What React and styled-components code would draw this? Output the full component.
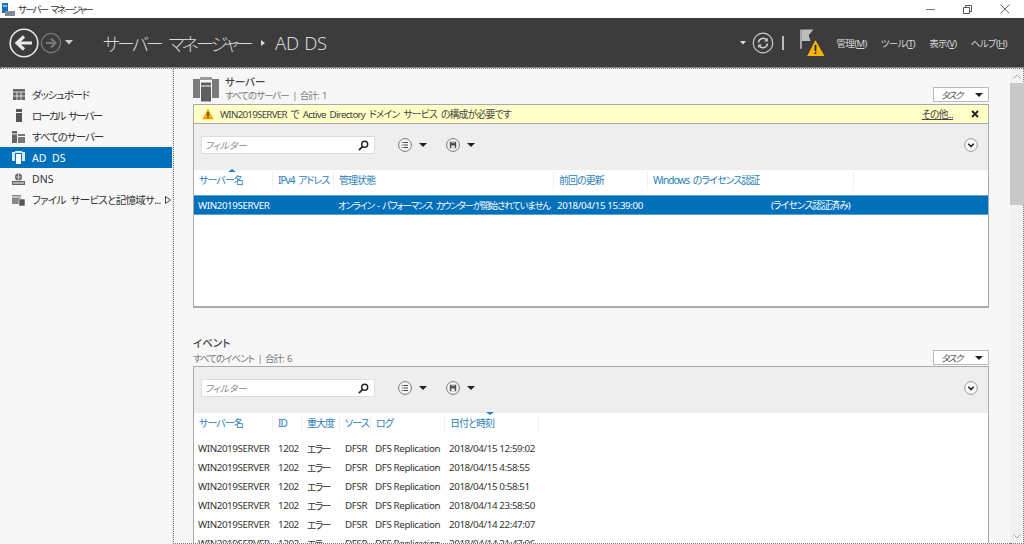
import React from 'react'
import styled, { createGlobalStyle } from 'styled-components'

const FONT = '"Noto Sans", "Noto Sans CJK JP", sans-serif'

const GlobalStyle = createGlobalStyle`
  html, body { margin: 0; padding: 0; background: #f7f7f7; overflow: hidden; }
  * { box-sizing: border-box; }
  body { font-family: ${FONT}; font-size: 10px; color: #333; font-feature-settings: "palt" 1; }
`

const Page = styled.div`
  width: 1024px;
  height: 544px;
  display: flex;
  flex-direction: column;
  overflow: hidden;
`
const TitleBar = styled.div`
  height: 18px;
  background: #fff;
  display: flex;
  align-items: center;
  padding-left: 2px;
  gap: 3px;
  flex: none;
`
const TitleText = styled.span`
  font-size: 9.5px;
  letter-spacing: -1.9px;
  word-spacing: 3px;
  color: #333;
`
const WinButtons = styled.div`
  margin-left: auto;
  display: flex;
  align-items: center;
  gap: 28px;
  padding-right: 14px;
`
const Header = styled.div`
  height: 50px;
  flex: none;
  background: #3c3c3c;
  display: flex;
  align-items: center;
  padding: 0 17px 0 9px;
  border-bottom: 1px solid #8a8a8a;
`
const Crumb = styled.div`
  margin-left: 30px;
  display: flex;
  align-items: center;
  color: #d9d9d9;
  font-size: 18px;
  letter-spacing: -2.9px;
  word-spacing: 6px;
  font-weight: 300;
`
const CrumbLast = styled.span`
  font-size: 18.5px;
  letter-spacing: -0.3px;
  word-spacing: 1px;
`
const CrumbSep = styled.span`
  width: 0;
  height: 0;
  margin: 0 10px 0 10px;
  border-left: 4px solid #ddd;
  border-top: 3px solid transparent;
  border-bottom: 3px solid transparent;
`
const HeaderRight = styled.div`
  margin-left: auto;
  display: flex;
  align-items: center;
`
const Menu = styled.div`
  display: flex;
  gap: 14px;
  margin-left: 11px;
`
const MenuItem = styled.span`
  color: #d6d6d6;
  font-size: 9.5px;
  letter-spacing: -0.6px;
`
const Body = styled.div`
  flex: 1;
  min-height: 0;
  display: flex;
  border-top: 1px dotted #777;
`
const Sidebar = styled.div`
  width: 173px;
  flex: none;
  background: #f7f7f7;
  padding-top: 15px;
  border-right: 1px solid #e4e4e4;
`
const NavItem = styled.div`
  height: 21px;
  display: flex;
  align-items: center;
  padding-left: 12px;
  gap: 7px;
  font-size: 10.5px;
  letter-spacing: ${p => p.$ls}px;
  word-spacing: 3px;
  white-space: nowrap;
  color: ${p => (p.$active ? '#fff' : '#333')};
  background: ${p => (p.$active ? '#0070bb' : 'transparent')};
`
const NavIcon = styled.span`
  width: 13px;
  display: flex;
  justify-content: center;
  flex: none;
`
const Main = styled.div`
  width: 837px;
  flex: none;
  padding: 7px 21px 0 19px;
  border-left: 1px dotted #777;
  border-bottom: 1px dotted #777;
  overflow: hidden;
`
const SectionHead = styled.div`
  display: flex;
  align-items: flex-end;
  height: 28px;
`
const EventHead = styled(SectionHead)`
  margin-top: 30px;
`
const HeadIcon = styled.div`
  width: 32px;
  margin-bottom: 2px;
`
const HeadText = styled.div`
  flex: 1;
  margin-bottom: ${p => p.$mb}px;
`
const HeadTitle = styled.div`
  font-size: 10.5px;
  font-weight: 500;
  line-height: 13px;
  color: #444;
  margin-bottom: ${p => p.$mb || 0}px;
`
const HeadSub = styled.div`
  font-size: 9.5px;
  letter-spacing: -1px;
  word-spacing: 2px;
  line-height: 13px;
  color: #777;
`
const TaskButton = styled.div`
  width: 56px;
  height: 15px;
  margin-bottom: ${p => p.$mb}px;
  border: 1px solid #bbb;
  background: #fff;
  display: flex;
  align-items: center;
  justify-content: space-between;
  padding: 0 5px 0 7px;
  font-size: 9.5px;
  font-style: italic;
  letter-spacing: -1.5px;
  color: #555;
`
const Tri = styled.span`
  width: 0;
  height: 0;
  border-top: 4px solid #222;
  border-left: 4px solid transparent;
  border-right: 4px solid transparent;
`
const Panel = styled.div`
  width: 796px;
  border: 1px solid #aaa;
  border-bottom-width: 2px;
  background: #fff;
  height: ${p => p.$height}px;
  overflow: hidden;
  flex: none;
`
const Notice = styled.div`
  height: 19px;
  background: #ffffc8;
  border-bottom: 1px solid #aaa;
  display: flex;
  align-items: center;
  padding: 0 9px 0 8px;
  font-size: 9.8px;
  color: #444;
`
const NoticeText = styled.span`
  margin-left: 6px;
  flex: 1;
  letter-spacing: -0.75px;
  word-spacing: 2px;
`
const NoticeLink = styled.span`
  text-decoration: underline;
  margin-right: 18px;
  letter-spacing: -0.8px;
`
const FilterRow = styled.div`
  height: 46px;
  background: #eee;
  display: flex;
  align-items: center;
  padding: 0 10px 4px 7px;
`
const FilterBox = styled.div`
  width: 174px;
  height: 18px;
  background: #fff;
  border: 1px solid #ddd;
  display: flex;
  align-items: center;
  justify-content: space-between;
  padding: 0 5px 0 3px;
  font-size: 9.5px;
  font-style: italic;
  color: #888;
`
const ToolBtn = styled.div`
  display: flex;
  align-items: center;
  gap: 7px;
  margin-left: ${p => p.$gap}px;
`
const Expand = styled.div`
  margin-left: auto;
  display: flex;
`
const HeaderRow = styled.div`
  display: flex;
  height: ${p => p.$height}px;
  padding-top: 2px;
  align-items: flex-start;
`
const ColHead = styled.div`
  width: ${p => p.$w}px;
  height: 18px;
  flex: none;
  padding-left: 5px;
  border-right: 1px solid #f0f0f0;
  color: #2a80b9;
  font-size: 10px;
  letter-spacing: -0.95px;
  word-spacing: 2px;
  line-height: 17px;
  white-space: nowrap;
  position: relative;
`
const SortMark = styled.span`
  position: absolute;
  top: -3px;
  left: ${p => p.$left}px;
  width: 0;
  height: 0;
  border-left: 4px solid transparent;
  border-right: 4px solid transparent;
  ${p => (p.$down ? 'border-top: 3px solid #2a80b9;' : 'border-bottom: 3px solid #2a80b9;')}
`
const SelRow = styled.div`
  height: 20px;
  background: #0070bb;
  border-top: 1px solid #5aa3d6;
  border-bottom: 1px solid #5aa3d6;
  color: #fff;
  display: flex;
  align-items: center;
  white-space: nowrap;
  font-size: 9.8px;
`
const Cell = styled.div`
  width: ${p => p.$w}px;
  flex: none;
  padding-left: 4px;
  white-space: nowrap;
  letter-spacing: ${p => p.$ls ?? -0.4}px;
`
const StatusCell = styled(Cell)`
  font-size: 9.3px;
  word-spacing: 2px;
`
const EventList = styled.div`
  padding-top: 4px;
`
const EventRow = styled.div`
  height: 19px;
  display: flex;
  align-items: center;
  font-size: 9.8px;
  color: #333;
`
const Scrollbar = styled.div`
  width: 14px;
  flex: none;
  background: #f1f1f1;
  display: flex;
  flex-direction: column;
  align-items: center;
  border-bottom: 1px dotted #777;
  border-right: 1px dotted #777;
`
const ScrollThumb = styled.div`
  width: 14px;
  height: 122px;
  background: #c8c8c8;
`
const ScrollEnd = styled.div`
  height: 14px;
  flex: none;
  display: flex;
  align-items: center;
  justify-content: center;
  margin-top: ${p => (p.$bottom ? 'auto' : '0')};
`

const Warn = ({ size = 13 }) => (
  <svg width={size} height={size} viewBox="0 0 16 16" style={{ flex: 'none' }}>
    <path d="M8 1 L15.5 15 H0.5 Z" fill="#f8a800" />
    <rect x="7.2" y="5.5" width="1.6" height="5.5" fill="#222" />
    <rect x="7.2" y="12" width="1.6" height="1.6" fill="#222" />
  </svg>
)

const SearchIcon = () => (
  <svg width="11" height="11" viewBox="0 0 12 12">
    <circle cx="7.3" cy="4.7" r="3.3" fill="none" stroke="#222" strokeWidth="1.5" />
    <path d="M4.8 7.2 L1 11" stroke="#222" strokeWidth="1.8" />
  </svg>
)

const ListCircle = () => (
  <svg width="14" height="14" viewBox="0 0 14 14">
    <circle cx="7" cy="7" r="6.4" fill="#f6f6f6" stroke="#777" />
    <path d="M5.5 4.5H10M5.5 7H10M5.5 9.5H10M3.7 4.5H4.7M3.7 7H4.7M3.7 9.5H4.7" stroke="#444" />
  </svg>
)

const SaveCircle = () => (
  <svg width="14" height="14" viewBox="0 0 14 14">
    <circle cx="7" cy="7" r="6.4" fill="#f6f6f6" stroke="#777" />
    <path d="M3.8 3.8H10.2V10.2H3.8Z" fill="#4a4a4a" />
    <rect x="5.4" y="3.8" width="3.2" height="1.5" fill="#aaa" />
    <rect x="5.2" y="7.4" width="3.6" height="2.8" fill="#e4e4e4" />
  </svg>
)

const ExpandIcon = () => (
  <svg width="14" height="14" viewBox="0 0 14 14">
    <circle cx="7" cy="7" r="6.3" fill="#fafafa" stroke="#999" />
    <path d="M4.3 5.8 L7 8.5 L9.7 5.8" fill="none" stroke="#222" strokeWidth="1.6" />
  </svg>
)

const ServerGroup = () => (
  <svg width="26" height="25" viewBox="0 0 26 25" style={{ display: 'block' }}>
    <path d="M0 2H7V21H0Z" fill="#7b7b7b" />
    <path d="M19 2H26V21H19Z" fill="#7b7b7b" />
    <path d="M7 0H19V3H7Z" fill="#9a9a9a" />
    <path d="M7.5 5H18.5V25H7.5Z" fill="#5f5f5f" stroke="#f7f7f7" />
    <path d="M8 9H18" stroke="#f7f7f7" />
  </svg>
)

const navIcons = {
  dash: (
    <svg width="12" height="11" viewBox="0 0 12 11">
      <path d="M0 0H12V11H0Z" fill="#666" />
      <path d="M0 3H12M0 7H12M4 3V11M8 3V11" stroke="#f7f7f7" strokeWidth="0.8" />
    </svg>
  ),
  local: (
    <svg width="6" height="13" viewBox="0 0 6 13">
      <path d="M0 0H6V13H0Z" fill="#555" />
      <path d="M0 3.5H6" stroke="#f7f7f7" />
    </svg>
  ),
  all: (
    <svg width="13" height="12" viewBox="0 0 13 12">
      <path d="M0 0H5V12H0Z" fill="#666" />
      <path d="M6 3H13V12H6Z" fill="#777" />
      <path d="M0 3H5M6 5.5H13" stroke="#f7f7f7" />
    </svg>
  ),
  ad: (
    <svg width="13" height="13" viewBox="0 0 13 13">
      <path d="M0 1H3V10H0ZM10 1H13V10H10ZM3 0H10V2H3Z" fill="#d8e8f4" />
      <path d="M4 3H9V13H4Z" fill="#fff" />
    </svg>
  ),
  dns: (
    <svg width="13" height="12" viewBox="0 0 13 12">
      <circle cx="6.5" cy="4" r="3.6" fill="#666" />
      <path d="M0 8H13V12H0Z" fill="#666" />
      <path d="M1 10H12" stroke="#f7f7f7" />
      <path d="M6.5 1V7M3.5 4H9.5" stroke="#f7f7f7" strokeWidth="0.7" />
    </svg>
  ),
  file: (
    <svg width="13" height="12" viewBox="0 0 13 12">
      <path d="M0 1H9V10H0Z" fill="#888" />
      <path d="M0 3H9" stroke="#f7f7f7" />
      <path d="M7 5H13V12H7Z" fill="#555" stroke="#f7f7f7" strokeWidth="0.6" />
    </svg>
  ),
}

const navItems = [
  { key: 'dash', label: 'ダッシュボード', ls: -1.2 },
  { key: 'local', label: 'ローカル サーバー', ls: -1.9 },
  { key: 'all', label: 'すべてのサーバー', ls: -1 },
  { key: 'ad', label: 'AD DS', ls: 0, active: true },
  { key: 'dns', label: 'DNS', ls: 0 },
  { key: 'file', label: 'ファイル サービスと記憶域サ...', ls: -0.7, more: true },
]

const serverCols = [
  { t: 'サーバー名', w: 79 },
  { t: 'IPv4 アドレス', w: 61 },
  { t: '管理状態', w: 220 },
  { t: '前回の更新', w: 94 },
  { t: 'Windows のライセンス認証', w: 206 },
]

const eventCols = [
  { t: 'サーバー名', w: 79 },
  { t: 'ID', w: 29 },
  { t: '重大度', w: 38 },
  { t: 'ソース', w: 31 },
  { t: 'ログ', w: 74 },
  { t: '日付と時刻', w: 94 },
]

const events = [
  '2018/04/15 12:59:02',
  '2018/04/15 4:58:55',
  '2018/04/15 0:58:51',
  '2018/04/14 23:58:50',
  '2018/04/14 22:47:07',
  '2018/04/14 21:47:06',
]

function Filter() {
  return (
    <>
      <FilterBox>フィルター<SearchIcon /></FilterBox>
      <ToolBtn $gap={23}><ListCircle /><Tri /></ToolBtn>
      <ToolBtn $gap={19}><SaveCircle /><Tri /></ToolBtn>
      <Expand><ExpandIcon /></Expand>
    </>
  )
}

export default function App() {
  return (
    <Page>
      <GlobalStyle />
      <TitleBar>
        <svg width="13" height="13" viewBox="0 0 13 13">
          <path d="M0 0H6V10H0Z" fill="#1a6fb5" />
          <path d="M3 8H13V13H3Z" fill="#7d8b99" />
          <path d="M1 3H5" stroke="#fff" />
        </svg>
        <TitleText>サーバー マネージャー</TitleText>
        <WinButtons>
          <svg width="9" height="9" viewBox="0 0 9 9"><path d="M0 4.5H9" stroke="#777" /></svg>
          <svg width="9" height="9" viewBox="0 0 9 9">
            <path d="M2.5 2V.5H8.5V6.5H7M.5 2.5H6.5V8.5H.5Z" fill="none" stroke="#555" />
          </svg>
          <svg width="10" height="10" viewBox="0 0 10 10"><path d="M.5 .5L9.5 9.5M9.5 .5L.5 9.5" stroke="#666" /></svg>
        </WinButtons>
      </TitleBar>
      <Header>
        <svg width="30" height="30" viewBox="0 0 30 30">
          <circle cx="15" cy="15" r="13.8" fill="none" stroke="#e8e8e8" strokeWidth="1.6" />
          <path d="M23 15H9M15 8.5L8 15L15 21.5" fill="none" stroke="#e8e8e8" strokeWidth="3.2" />
        </svg>
        <svg width="22" height="22" viewBox="0 0 22 22" style={{ marginLeft: 1 }}>
          <circle cx="11" cy="11" r="9.6" fill="none" stroke="#777" strokeWidth="1.3" />
          <path d="M6 11H15M11 6.5L15.5 11L11 15.5" fill="none" stroke="#777" strokeWidth="2.2" />
        </svg>
        <svg width="8" height="5" viewBox="0 0 8 5" style={{ marginLeft: 3 }}><path d="M0 0H8L4 4.5Z" fill="#ccc" /></svg>
        <Crumb>サーバー マネージャー<CrumbSep /><CrumbLast>AD DS</CrumbLast></Crumb>
        <HeaderRight>
          <svg width="6" height="4" viewBox="0 0 6 4"><path d="M0 0H6L3 3.5Z" fill="#ddd" /></svg>
          <svg width="22" height="22" viewBox="0 0 22 22" style={{ marginLeft: 6 }}>
            <circle cx="11" cy="11" r="9.8" fill="none" stroke="#ccc" strokeWidth="1.2" />
            <path d="M6.5 10.5A4.6 4.6 0 0 1 14.8 8.2M15.5 11.5A4.6 4.6 0 0 1 7.2 13.8" fill="none" stroke="#ccc" strokeWidth="1.6" />
            <path d="M15.8 5.8V9.4H12.2ZM6.2 16.2V12.6H9.8Z" fill="#ccc" />
          </svg>
          <svg width="2" height="14" viewBox="0 0 2 14" style={{ marginLeft: 8 }}><path d="M0 0H2V14H0Z" fill="#bbb" /></svg>
          <svg width="25" height="28" viewBox="0 0 26 28" style={{ marginLeft: 16 }}>
            <path d="M0 0H2V20H0Z" fill="#aaa" />
            <path d="M2 0H14L9 6L11 12H2Z" fill="#bdbdbd" />
            <path d="M16 11 L25.5 27.5 H7.5 Z" fill="#f8b400" />
            <rect x="15.2" y="16" width="1.8" height="6.5" fill="#222" />
            <rect x="15.2" y="23.5" width="1.8" height="1.8" fill="#222" />
          </svg>
          <Menu>
            <MenuItem>管理(<u>M</u>)</MenuItem>
            <MenuItem>ツール(<u>T</u>)</MenuItem>
            <MenuItem>表示(<u>V</u>)</MenuItem>
            <MenuItem>ヘルプ(<u>H</u>)</MenuItem>
          </Menu>
        </HeaderRight>
      </Header>
      <Body>
        <Sidebar>
          {navItems.map(n => (
            <NavItem key={n.key} $active={n.active} $ls={n.ls}>
              <NavIcon>{navIcons[n.key]}</NavIcon>
              {n.label}
              {n.more && (
                <svg width="6" height="8" viewBox="0 0 6 8" style={{ marginLeft: -3 }}>
                  <path d="M.5 .5L5.5 4L.5 7.5Z" fill="none" stroke="#444" />
                </svg>
              )}
            </NavItem>
          ))}
        </Sidebar>
        <Main>
          <SectionHead>
            <HeadIcon><ServerGroup /></HeadIcon>
            <HeadText $mb={2}>
              <HeadTitle>サーバー</HeadTitle>
              <HeadSub>すべてのサーバー | 合計: 1</HeadSub>
            </HeadText>
            <TaskButton $mb={2}>タスク<Tri /></TaskButton>
          </SectionHead>
          <Panel $height={204}>
            <Notice>
              <Warn size={12} />
              <NoticeText>WIN2019SERVER で Active Directory ドメイン サービス の構成が必要です</NoticeText>
              <NoticeLink>その他...</NoticeLink>
              <svg width="8" height="8" viewBox="0 0 8 8"><path d="M1 1L7 7M7 1L1 7" stroke="#222" strokeWidth="1.8" /></svg>
            </Notice>
            <FilterRow><Filter /></FilterRow>
            <HeaderRow $height={25}>
              {serverCols.map((c, i) => (
                <ColHead key={c.t} $w={c.w}>
                  {i === 0 && <SortMark $left={34} />}
                  {c.t}
                </ColHead>
              ))}
            </HeaderRow>
            <SelRow>
              <Cell $w={140}>WIN2019SERVER</Cell>
              <StatusCell $w={219} $ls={-1.1}>オンライン - パフォーマンス カウンターが開始されていません</StatusCell>
              <Cell $w={214}>2018/04/15 15:39:00</Cell>
              <Cell $w={150} $ls={-0.9}>(ライセンス認証済み)</Cell>
            </SelRow>
          </Panel>
          <EventHead>
            <HeadText $mb={1}>
              <HeadTitle $mb={2}>イベント</HeadTitle>
              <HeadSub>すべてのイベント | 合計: 6</HeadSub>
            </HeadText>
            <TaskButton $mb={1}>タスク<Tri /></TaskButton>
          </EventHead>
          <Panel $height={190}>
            <FilterRow><Filter /></FilterRow>
            <HeaderRow $height={22}>
              {eventCols.map((c, i) => (
                <ColHead key={c.t} $w={c.w}>
                  {i === 5 && <SortMark $left={41} $down />}
                  {c.t}
                </ColHead>
              ))}
            </HeaderRow>
            <EventList>
              {events.map(d => (
                <EventRow key={d}>
                  <Cell $w={80}>WIN2019SERVER</Cell>
                  <Cell $w={29}>1202</Cell>
                  <Cell $w={38} $ls={-1.6}>エラー</Cell>
                  <Cell $w={30}>DFSR</Cell>
                  <Cell $w={74}>DFS Replication</Cell>
                  <Cell $w={110}>{d}</Cell>
                </EventRow>
              ))}
            </EventList>
          </Panel>
        </Main>
        <Scrollbar>
          <ScrollEnd>
            <svg width="8" height="5" viewBox="0 0 8 5"><path d="M.5 4.5L4 1L7.5 4.5" fill="none" stroke="#aaa" /></svg>
          </ScrollEnd>
          <ScrollThumb />
          <ScrollEnd $bottom>
            <svg width="8" height="5" viewBox="0 0 8 5"><path d="M.5 .5L4 4L7.5 .5" fill="none" stroke="#aaa" /></svg>
          </ScrollEnd>
        </Scrollbar>
      </Body>
    </Page>
  )
}
